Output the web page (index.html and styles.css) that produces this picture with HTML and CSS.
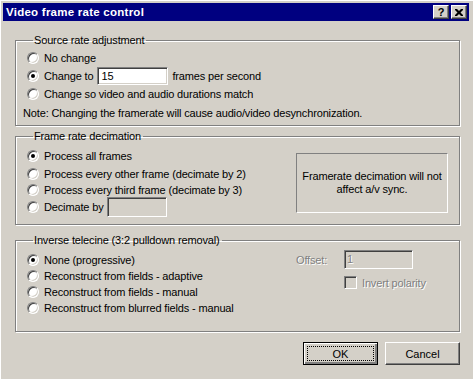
FILE: index.html
```html
<!DOCTYPE html>
<html lang="en">
<head>
  <meta charset="UTF-8" />
  <title>Video frame rate control</title>
  <link rel="stylesheet" href="styles.css">
</head>
<body>
  <div class="window">
    <!-- Title bar -->
    <div class="titlebar">
      <span class="title">Video frame rate control</span>
      <span class="tb-btn help">?</span>
      <span class="tb-btn close">
        <svg width="8" height="7" viewBox="0 0 8 7"><path d="M0 0h2l2 2 2-2h2v1l-2.5 2.5L8 6v1H6L4 5 2 7H0V6l2.5-2.5L0 1z" fill="#000"/></svg>
      </span>
    </div>

    <div class="content">
      <!-- Source rate -->
      <fieldset class="group g-source">
        <legend>Source rate adjustment</legend>
        <div class="row"><span class="radio"></span><span>No change</span></div>
        <div class="row"><span class="radio checked"></span><span>Change to</span><span class="edit fps">15</span><span class="after">frames per second</span></div>
        <div class="row"><span class="radio"></span><span>Change so video and audio durations match</span></div>
        <div class="note">Note: Changing the framerate will cause audio/video desynchronization.</div>
      </fieldset>

      <!-- Decimation -->
      <fieldset class="group g-decim">
        <legend>Frame rate decimation</legend>
        <div class="cols">
          <div class="list">
            <div class="row r18"><span class="radio checked"></span><span>Process all frames</span></div>
            <div class="row r17"><span class="radio"></span><span>Process every other frame (decimate by 2)</span></div>
            <div class="row r16"><span class="radio"></span><span>Process every third frame (decimate by 3)</span></div>
            <div class="row r18"><span class="radio"></span><span>Decimate by</span><span class="edit decim"></span></div>
          </div>
          <div class="info">Framerate decimation will not<br>affect a/v sync.</div>
        </div>
      </fieldset>

      <!-- Telecine -->
      <fieldset class="group g-ivtc">
        <legend>Inverse telecine (3:2 pulldown removal)</legend>
        <div class="cols">
          <div class="list">
            <div class="row r16"><span class="radio checked"></span><span>None (progressive)</span></div>
            <div class="row r16"><span class="radio"></span><span>Reconstruct from fields - adaptive</span></div>
            <div class="row r16"><span class="radio"></span><span>Reconstruct from fields - manual</span></div>
            <div class="row r16"><span class="radio"></span><span>Reconstruct from blurred fields - manual</span></div>
          </div>
          <div class="opts">
            <div class="offset-row"><span class="disabled off-label">Offset:</span><span class="edit offset disabled">1</span></div>
            <div class="check-row"><span class="check"></span><span class="disabled">Invert polarity</span></div>
          </div>
        </div>
      </fieldset>

      <!-- Buttons -->
      <div class="buttons">
        <button class="btn default"><span class="focus">OK</span></button>
        <button class="btn">Cancel</button>
      </div>
    </div>
  </div>
</body>
</html>
```

FILE: styles.css
```css
body {
  margin: 0;
  padding: 0;
  background-color: #d4d0c8;
  font-family: 'Liberation Sans', Arial, sans-serif;
  font-size: 11px;
  letter-spacing: -0.15px;
  color: #000;
}

.window {
  width: 473px;
  height: 379px;
  box-sizing: border-box;
  padding: 3px 3px 0 3px;
  background-color: #d4d0c8;
  border-top: 1px solid #fff;
  border-left: 1px solid #fff;
}

.titlebar {
  height: 18px;
  width: 466px;
  margin-left: -1px;
  margin-top: -1px;
  background-color: #000080;
  display: flex;
  align-items: center;
  padding: 0 2px 0 3px;
  box-sizing: border-box;
}

.title {
  flex: 1;
  color: #fff;
  font-weight: bold;
  font-size: 11.5px;
  letter-spacing: 0.25px;
}

.tb-btn {
  width: 16px;
  height: 14px;
  box-sizing: border-box;
  background-color: #d4d0c8;
  border-top: 1px solid #fff;
  border-left: 1px solid #fff;
  border-right: 1px solid #404040;
  border-bottom: 1px solid #404040;
  box-shadow: inset -1px -1px #808080;
  display: flex;
  align-items: center;
  justify-content: center;
  font-weight: bold;
  font-size: 11px;
  line-height: 11px;
}

.help {
  margin-right: 2px;
}

.content {
  padding-top: 13px;
  padding-left: 11px;
}

/* Group boxes */
.group {
  width: 445px;
  box-sizing: border-box;
  margin: 0;
  padding: 0 0 0 11px;
  border: 1px solid #808080;
  box-shadow: inset 1px 1px #fff, 1px 1px #fff;
}

.group legend {
  padding: 0 2px 0 1px;
  margin-left: 6px;
  line-height: 13px;
  height: 13px;
}

.g-source {
  height: 92px;
}

.g-decim {
  height: 95px;
  margin-top: 4px;
}

.g-ivtc {
  height: 98px;
  margin-top: 9px;
}

.row {
  display: flex;
  align-items: center;
  height: 18px;
  white-space: nowrap;
}

.r16 { height: 16px; }
.r17 { height: 17px; }
.r18 { height: 18px; }

.g-source .row:first-of-type {
  margin-top: 2px;
}

.radio {
  width: 12px;
  height: 12px;
  box-sizing: border-box;
  border-radius: 50%;
  background-color: #fff;
  border: 1px solid;
  border-color: #808080 #fff #fff #808080;
  box-shadow: inset 1px 1px #404040, inset -1px -1px #d4d0c8;
  margin-right: 5px;
  position: relative;
  flex: none;
}

.radio.checked::after {
  content: "";
  position: absolute;
  left: 3px;
  top: 3px;
  width: 4px;
  height: 4px;
  border-radius: 50%;
  background-color: #000;
}

.edit {
  display: inline-block;
  box-sizing: border-box;
  background-color: #fff;
  border: 1px solid;
  border-color: #808080 #fff #fff #808080;
  box-shadow: inset 1px 1px #404040, inset -1px -1px #d4d0c8;
  padding: 0 3px;
  line-height: 16px;
}

.fps {
  width: 71px;
  height: 18px;
  margin-left: 4px;
}

.after {
  margin-left: 4px;
}

.decim {
  width: 60px;
  height: 20px;
  margin-left: 4px;
  background-color: #d4d0c8;
}

.note {
  margin-top: 3px;
  margin-left: -4px;
  line-height: 14px;
}

.cols {
  display: flex;
  justify-content: space-between;
}

.g-decim .list {
  margin-top: 4px;
}

.info {
  width: 152px;
  height: 60px;
  box-sizing: border-box;
  margin-top: 10px;
  margin-right: 11px;
  border: 1px solid;
  border-color: #808080 #fff #fff #808080;
  display: flex;
  align-items: center;
  justify-content: center;
  text-align: center;
  line-height: 13px;
}

.g-ivtc .list {
  margin-top: 5px;
}

.opts {
  width: 152px;
  margin-right: 11px;
  margin-top: 3px;
}

.disabled {
  color: #808080;
  text-shadow: 1px 1px #fff;
}

.offset-row {
  display: flex;
  align-items: center;
  height: 19px;
}

.off-label {
  width: 48px;
}

.offset {
  width: 69px;
  height: 19px;
  background-color: #d4d0c8;
  padding-left: 2px;
}

.check-row {
  display: flex;
  align-items: center;
  margin-top: 7px;
  margin-left: 48px;
}

.check {
  width: 13px;
  height: 13px;
  box-sizing: border-box;
  border: 1px solid;
  border-color: #808080 #fff #fff #808080;
  box-shadow: inset 1px 1px #404040, inset -1px -1px #d4d0c8;
  background-color: #d4d0c8;
  margin-right: 5px;
}

/* Dialog buttons */
.buttons {
  display: flex;
  justify-content: flex-end;
  gap: 7px;
  width: 445px;
  margin-top: 10px;
}

.btn {
  width: 75px;
  height: 23px;
  box-sizing: border-box;
  padding: 0;
  margin: 0;
  font-family: 'Liberation Sans', Arial, sans-serif;
  font-size: 11px;
  color: #000;
  background-color: #d4d0c8;
  border: 1px solid;
  border-color: #fff #404040 #404040 #fff;
  box-shadow: inset -1px -1px #808080;
}

.btn.default {
  border: 1px solid #000;
  box-shadow: inset 1px 1px #fff, inset -2px -2px #808080, inset -1px -1px #404040;
  padding: 3px;
}

.focus {
  display: flex;
  align-items: center;
  justify-content: center;
  height: 100%;
  border: 1px dotted #000;
  box-sizing: border-box;
}
```
